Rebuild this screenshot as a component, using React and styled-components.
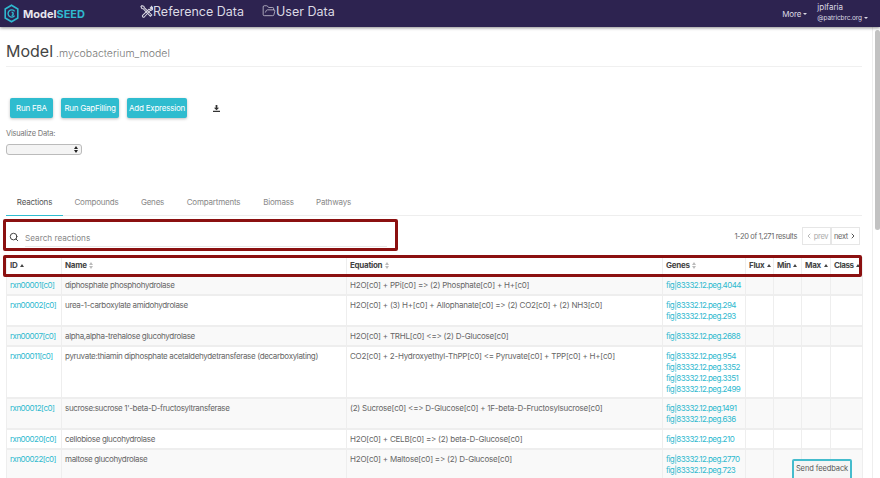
import React from 'react';
import styled, { createGlobalStyle } from 'styled-components';
import { FolderOpen, Search, ChevronLeft, ChevronRight } from 'lucide-react';

const GlobalStyle = createGlobalStyle`
  html, body { margin: 0; padding: 0; height: 100%; overflow: hidden; background: #fff; }
  body {
    font-family: Inter, "Noto Sans", sans-serif;
    color: #555;
    font-variant-ligatures: none;
    font-feature-settings: "calt" 0, "liga" 0;
  }
`;

const Page = styled.div`
  position: relative;
  width: 880px;
  height: 478px;
  overflow: hidden;
  display: flex;
  flex-direction: column;
`;

const NavBar = styled.header`
  flex: none;
  height: 27px;
  background: #2d2350;
  box-shadow: 0 1px 3px rgba(0, 0, 0, 0.45);
  display: flex;
  align-items: center;
  position: relative;
  z-index: 2;
`;

const Brand = styled.div`
  width: 140px;
  display: flex;
  align-items: center;
  gap: 4px;
  padding-left: 4px;
  box-sizing: border-box;
  font-size: 11px;
  font-weight: 700;
  color: #e8e6ee;
  span { color: #2fb9cf; }
`;

const NavLink = styled.div`
  display: flex;
  align-items: center;
  font-size: 12.5px;
  color: #dcdae4;
  margin-right: ${(p) => p.$gap || 0}px;
  height: 22px;
  margin-top: -5px;
`;

const NavRight = styled.div`
  margin-left: auto;
  display: flex;
  align-items: center;
  padding-right: 12px;
`;

const More = styled.div`
  font-size: 8px;
  letter-spacing: -0.1px;
  color: #dcdae4;
  margin-right: 10px;
  display: flex;
  align-items: center;
  gap: 2px;
`;

const UserBox = styled.div`
  font-size: 8px;
  line-height: 11px;
  color: #dcdae4;
  margin-top: -2px;
  div:last-child { display: flex; align-items: center; gap: 2px; font-size: 6.5px; letter-spacing: -0.1px; }
`;

const Caret = styled.i`
  display: inline-block;
  border-left: 2.5px solid transparent;
  border-right: 2.5px solid transparent;
  border-top: 2.5px solid #dcdae4;
`;

const Body = styled.div`
  flex: 1;
  display: flex;
  min-height: 0;
`;

const Main = styled.main`
  flex: 1;
  min-width: 0;
  padding: 0 10px 0 6px;
`;

const ScrollTrack = styled.div`
  flex: none;
  width: 8px;
  border-left: 1px solid #eee;
  padding: 3px 0 0 2px;
  box-sizing: border-box;
`;

const ScrollThumb = styled.div`
  width: 5px;
  height: 200px;
  background: #c2c2c2;
  border-radius: 3px;
`;

const Title = styled.div`
  padding-top: 13px;
  border-bottom: 1px solid #f0f0f0;
  height: 26px;
  display: flex;
  align-items: baseline;
  gap: 3px;
  font-size: 16px;
  line-height: 22px;
  color: #444;
  small { font-size: 10.5px; font-weight: 300; color: #777; }
`;

const ButtonRow = styled.div`
  display: flex;
  align-items: center;
  gap: 8px;
  margin: 31px 0 0 4px;
  height: 20px;
`;

const ActionButton = styled.button`
  width: ${(p) => p.$w}px;
  height: 20px;
  padding: 0;
  border: 0;
  border-radius: 2px;
  background: #2fbccf;
  color: #fff;
  font-family: inherit;
  font-size: 8px;
  letter-spacing: -0.22px;
  white-space: nowrap;
  box-shadow: 0 1px 3px rgba(0, 0, 0, 0.25);
`;

const DownloadIcon = styled.svg`
  width: 7px;
  height: 7px;
  margin-left: 18px;
  fill: #333;
`;

const FieldLabel = styled.div`
  margin-top: 10px;
  font-size: 7.5px;
  letter-spacing: -0.2px;
  line-height: 11px;
  color: #777;
`;

const FakeSelect = styled.div`
  margin-top: 5px;
  width: 76px;
  height: 11px;
  box-sizing: border-box;
  border: 1px solid #bbb;
  border-radius: 3px;
  background: #f4f4f4;
  display: flex;
  flex-direction: column;
  align-items: flex-end;
  justify-content: center;
  gap: 1px;
  padding-right: 3px;
`;

const Arrow = styled.i`
  display: block;
  border-left: 2px solid transparent;
  border-right: 2px solid transparent;
  ${(p) => (p.$up ? 'border-bottom: 3px solid #222;' : 'border-top: 3px solid #222;')}
`;

const Tabs = styled.nav`
  margin-top: 39px;
  height: 21px;
  display: flex;
  border-bottom: 1px solid #eee;
`;

const Tab = styled.div`
  margin-left: ${(p) => p.$left}px;
  width: ${(p) => p.$w}px;
  height: 22px;
  box-sizing: border-box;
  padding-top: 2px;
  font-size: 8px;
  letter-spacing: -0.2px;
  line-height: 13px;
  text-align: center;
  color: ${(p) => (p.$active ? '#555' : '#888')};
  border-bottom: ${(p) => (p.$active ? '1.5px solid #2fbccf' : '0')};
`;

const SearchRow = styled.div`
  margin: 3px 2px 0 -3px;
  display: flex;
  align-items: center;
  height: 32px;
  justify-content: space-between;
`;

const SearchBox = styled.div`
  width: 395px;
  height: 32px;
  box-sizing: border-box;
  border: 3px solid #8b1010;
  border-radius: 2px;
  display: flex;
  align-items: center;
  padding: 0 8px 0 3px;
  gap: 6px;
  color: #444;
`;

const SearchIcon = styled(Search)`
  flex: none;
  margin-top: 3px;
`;

const SearchField = styled.div`
  flex: 1;
  height: 14px;
  margin-top: 9px;
  border-bottom: 1px solid #e8e8e8;
  font-size: 8.2px;
  line-height: 12px;
  color: #888;
`;

const Pager = styled.div`
  display: flex;
  align-items: center;
  margin-top: 2px;
  font-size: 7.5px;
  letter-spacing: -0.35px;
  color: #666;
`;

const PageButton = styled.div`
  width: 27px;
  height: 16px;
  border: 1px solid #e6e6e6;
  margin-left: ${(p) => p.$left || 0}px;
  display: flex;
  align-items: center;
  justify-content: center;
  gap: 1px;
  font-size: 7.5px;
  color: ${(p) => (p.$off ? '#aaa' : '#666')};
`;

const TableWrap = styled.div`
  position: relative;
  margin-top: 6px;
`;

const HeaderMark = styled.div`
  position: absolute;
  left: -3px;
  top: -2px;
  width: 859px;
  height: 22px;
  box-sizing: border-box;
  border: 3px solid #8b1010;
  border-radius: 2px;
  pointer-events: none;
`;

const Table = styled.table`
  width: 856px;
  table-layout: fixed;
  border-collapse: collapse;
  font-size: 8px;
  letter-spacing: -0.28px;
  line-height: 11px;
`;

const HeadRow = styled.tr`
  height: 18px;
  th {
    padding: 0 3px;
    text-align: left;
    font-weight: 700;
    color: #444;
    white-space: nowrap;
    border-left: 1px solid #eee;
    border-right: 1px solid #eee;
  }
  th:last-child { letter-spacing: -0.45px; }
`;

const Row = styled.tr`
  height: ${(p) => p.$h}px;
  background: ${(p) => (p.$odd ? '#f9f9f9' : '#fff')};
  td {
    padding: 4px 3px 0;
    vertical-align: top;
    color: #666;
    border: 1px solid #eee;
    border-top-width: 2px;
    white-space: nowrap;
  }
  td:nth-child(2) { letter-spacing: -0.34px; }
  td:nth-child(3) { letter-spacing: -0.22px; }
`;

const CellLink = styled.a`
  display: block;
  color: #2fb9cf;
  letter-spacing: -0.55px;
`;

const SortMark = styled.span`
  display: inline-flex;
  flex-direction: column;
  gap: 1px;
  margin-left: 1px;
  vertical-align: middle;
`;

const SortUp = styled.i`
  display: block;
  border-left: 2.5px solid transparent;
  border-right: 2.5px solid transparent;
  border-bottom: 3px solid ${(p) => (p.$on ? '#444' : '#bbb')};
`;

const SortDown = styled.i`
  display: block;
  border-left: 2.5px solid transparent;
  border-right: 2.5px solid transparent;
  border-top: 3px solid #bbb;
`;

const Feedback = styled.div`
  position: absolute;
  left: 792px;
  top: 459px;
  width: 60px;
  height: 22px;
  box-sizing: border-box;
  border: 2px solid #45bccd;
  border-radius: 2px;
  background: #f5f5f5;
  font-size: 7.5px;
  letter-spacing: -0.1px;
  line-height: 16px;
  white-space: nowrap;
  text-align: center;
  color: #555;
  z-index: 3;
`;

const Logo = () => (
  <svg width="15" height="19" viewBox="0 0 15 19" fill="none" stroke="#2fb9cf">
    <path d="M7.5 1.2 13.8 5v9L7.5 17.8 1.2 14V5Z" strokeWidth="1.6" />
    <path d="M10.6 11.6a3.6 3.6 0 1 1 0-4.2M7.6 8.2a1.6 1.6 0 0 1 0 3.2" strokeWidth="1.4" />
  </svg>
);

const ToolsIcon = () => (
  <svg width="13" height="15" viewBox="0 0 14 15" fill="none" stroke="#dcdae4" strokeWidth="1.1">
    <path d="M2 1.2 1 2.2l1 2 1.4.3 7.8 8.2 1.5-1.5L4.6 3.4 4.2 2Z" />
    <path d="M12.7 2.2a2.6 2.6 0 0 1-3.2 3L2.8 11.6a1.3 1.3 0 0 0 1.8 1.8L11 6.4a2.6 2.6 0 0 0 2.8-3.2L12.2 4.6 11 3.6l1.6-1.6Z" />
  </svg>
);

const Sort = ({ on, single }) => (
  <SortMark>
    <SortUp $on={on} />
    {!single && <SortDown />}
  </SortMark>
);

const rows = [
  { id: 'rxn00001[c0]', name: 'diphosphate phosphohydrolase', eq: 'H2O[c0] + PPi[c0] => (2) Phosphate[c0] + H+[c0]', genes: ['4044'], h: 20 },
  { id: 'rxn00002[c0]', name: 'urea-1-carboxylate amidohydrolase', eq: 'H2O[c0] + (3) H+[c0] + Allophanate[c0] => (2) CO2[c0] + (2) NH3[c0]', genes: ['294', '293'], h: 31 },
  { id: 'rxn00007[c0]', name: 'alpha,alpha-trehalose glucohydrolase', eq: 'H2O[c0] + TRHL[c0] <=> (2) D-Glucose[c0]', genes: ['2688'], h: 20 },
  { id: 'rxn00011[c0]', name: 'pyruvate:thiamin diphosphate acetaldehydetransferase (decarboxylating)', eq: 'CO2[c0] + 2-Hydroxyethyl-ThPP[c0] <= Pyruvate[c0] + TPP[c0] + H+[c0]', genes: ['954', '3352', '3351', '2499'], h: 52 },
  { id: 'rxn00012[c0]', name: "sucrose:sucrose 1'-beta-D-fructosyltransferase", eq: '(2) Sucrose[c0] <=> D-Glucose[c0] + 1F-beta-D-Fructosylsucrose[c0]', genes: ['1491', '636'], h: 31 },
  { id: 'rxn00020[c0]', name: 'cellobiose glucohydrolase', eq: 'H2O[c0] + CELB[c0] => (2) beta-D-Glucose[c0]', genes: ['210'], h: 20 },
  { id: 'rxn00022[c0]', name: 'maltose glucohydrolase', eq: 'H2O[c0] + Maltose[c0] => (2) D-Glucose[c0]', genes: ['2770', '723'], h: 31 },
];

const tabs = [
  { label: 'Reactions', left: 0, w: 57, active: true },
  { label: 'Compounds', left: 5, w: 57 },
  { label: 'Genes', left: 12.5, w: 30 },
  { label: 'Compartments', left: 16, w: 60 },
  { label: 'Biomass', left: 17, w: 36 },
  { label: 'Pathways', left: 17, w: 40 },
];

export default function App() {
  return (
    <Page>
      <GlobalStyle />
      <NavBar>
        <Brand>
          <Logo />
          <div>Model<span>SEED</span></div>
        </Brand>
        <NavLink $gap={18}><ToolsIcon />Reference Data</NavLink>
        <NavLink><FolderOpen size={14} strokeWidth={1.2} />User Data</NavLink>
        <NavRight>
          <More>More <Caret /></More>
          <UserBox>
            <div>jplfaria</div>
            <div>@patricbrc.org <Caret /></div>
          </UserBox>
        </NavRight>
      </NavBar>
      <Body>
        <Main>
          <Title>Model <small>.mycobacterium_model</small></Title>
          <ButtonRow>
            <ActionButton $w={43}>Run FBA</ActionButton>
            <ActionButton $w={58}>Run GapFilling</ActionButton>
            <ActionButton $w={60}>Add Expression</ActionButton>
            <DownloadIcon viewBox="0 0 8 8">
              <path d="M3 0h2v3h2L4 6 1 3h2ZM0 6.6h8V8H0Z" />
            </DownloadIcon>
          </ButtonRow>
          <FieldLabel>Visualize Data:</FieldLabel>
          <FakeSelect>
            <Arrow $up />
            <Arrow />
          </FakeSelect>
          <Tabs>
            {tabs.map((t) => (
              <Tab key={t.label} $left={t.left} $w={t.w} $active={t.active}>{t.label}</Tab>
            ))}
          </Tabs>
          <SearchRow>
            <SearchBox>
              <SearchIcon size={10} strokeWidth={2.4} />
              <SearchField>Search reactions</SearchField>
            </SearchBox>
            <Pager>
              1-20 of 1,271 results
              <PageButton $left={5} $off><ChevronLeft size={8} strokeWidth={2.5} />prev</PageButton>
              <PageButton>next<ChevronRight size={8} strokeWidth={2.5} color="#333" /></PageButton>
            </Pager>
          </SearchRow>
          <TableWrap>
            <Table>
              <colgroup>
                <col style={{ width: 55 }} />
                <col style={{ width: 285 }} />
                <col style={{ width: 316 }} />
                <col style={{ width: 83 }} />
                <col style={{ width: 28 }} />
                <col style={{ width: 28 }} />
                <col style={{ width: 29 }} />
                <col style={{ width: 32 }} />
              </colgroup>
              <thead>
                <HeadRow>
                  <th>ID <Sort on single /></th>
                  <th>Name <Sort /></th>
                  <th>Equation <Sort /></th>
                  <th>Genes <Sort /></th>
                  <th>Flux <Sort on single /></th>
                  <th>Min <Sort on single /></th>
                  <th>Max <Sort on single /></th>
                  <th>Class <Sort on single /></th>
                </HeadRow>
              </thead>
              <tbody>
                {rows.map((r, i) => (
                  <Row key={r.id} $h={r.h} $odd={i % 2 === 0}>
                    <td><CellLink>{r.id}</CellLink></td>
                    <td>{r.name}</td>
                    <td>{r.eq}</td>
                    <td>{r.genes.map((g) => <CellLink key={g}>fig|83332.12.peg.{g}</CellLink>)}</td>
                    <td />
                    <td />
                    <td />
                    <td />
                  </Row>
                ))}
              </tbody>
            </Table>
            <HeaderMark />
          </TableWrap>
        </Main>
        <ScrollTrack><ScrollThumb /></ScrollTrack>
      </Body>
      <Feedback>Send feedback</Feedback>
    </Page>
  );
}
